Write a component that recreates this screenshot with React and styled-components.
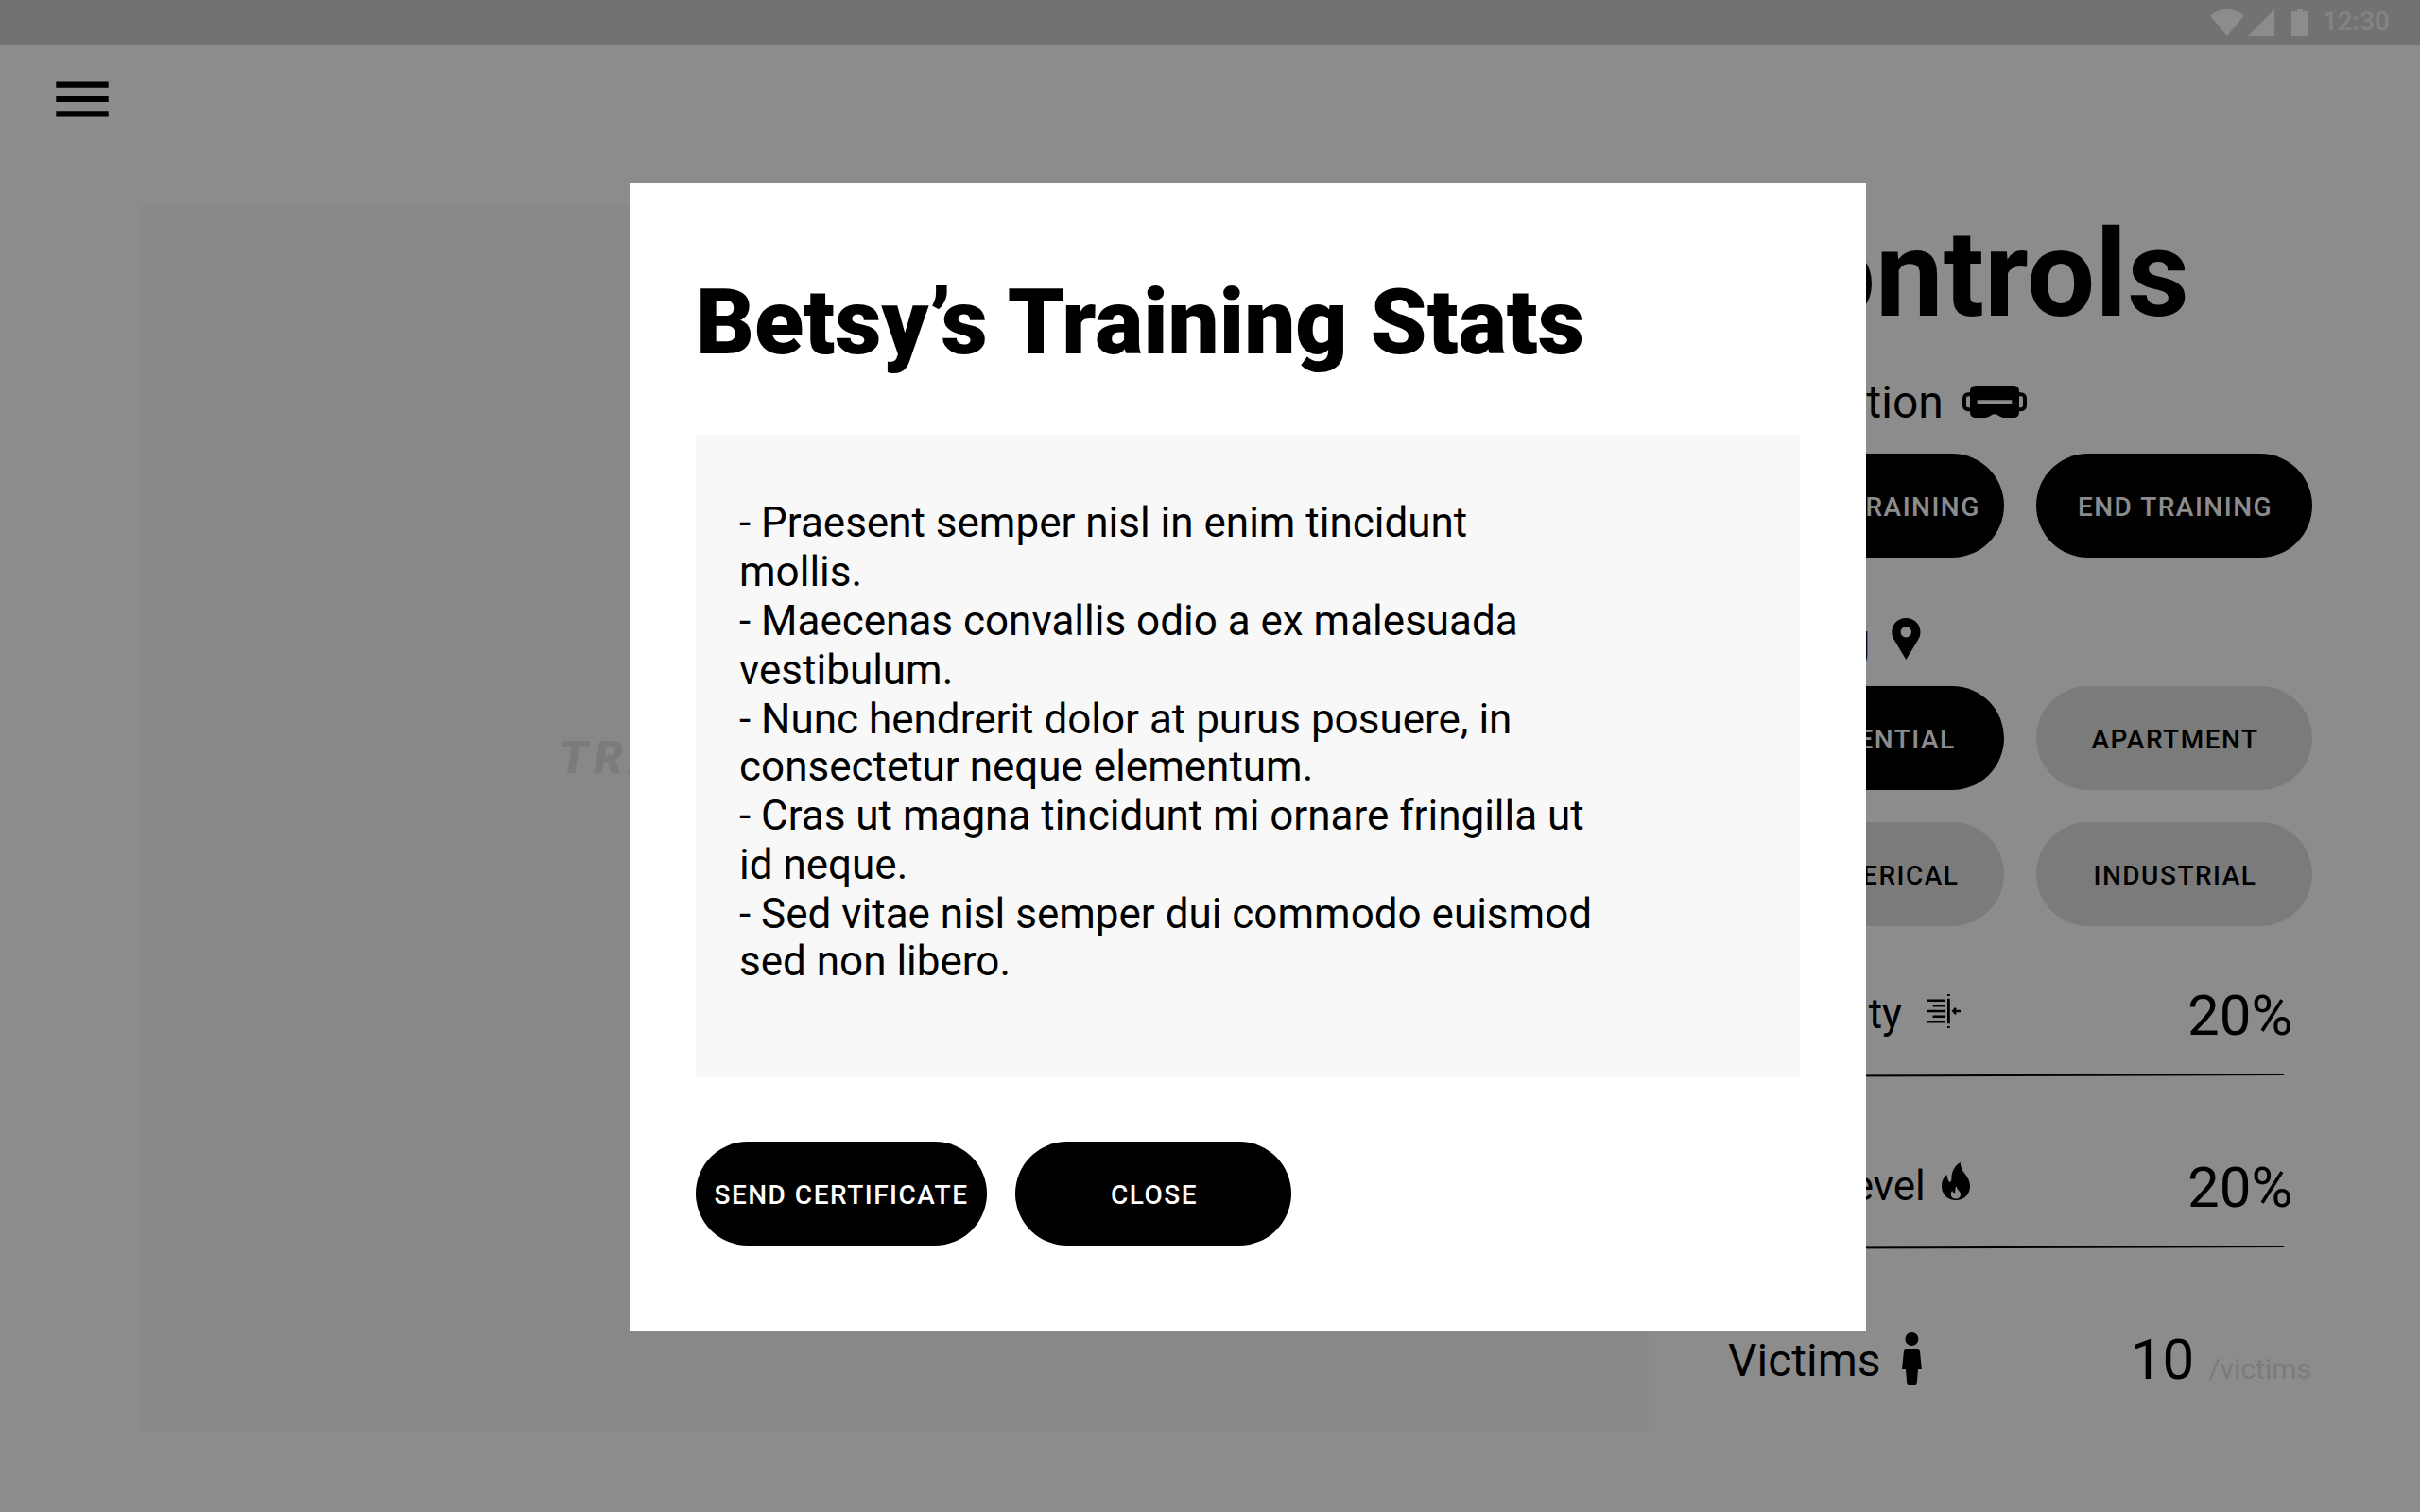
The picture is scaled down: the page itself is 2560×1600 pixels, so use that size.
import React from "react";
import styled, { createGlobalStyle } from "styled-components";

const GlobalStyle = createGlobalStyle`
  * { box-sizing: border-box; }
  body { margin: 0; background: #fff; font-family: Roboto, "Liberation Sans", sans-serif; color: #000; }
  h1, h2, p { margin: 0; }
  svg { display: block; flex: none; }
`;

const Screen = styled.div`
  position: relative;
  width: 2560px;
  height: 1600px;
  overflow: hidden;
  background: #fff;
`;

const StatusBar = styled.div`
  height: 48px;
  padding: 0 32px 0 0;
  display: flex;
  justify-content: flex-end;
  align-items: center;
  background: #cfcfcf;
`;

const StatusTime = styled.span`
  margin: -2px 0 0 15px;
  font-size: 28px;
  font-weight: 500;
  line-height: 34px;
  color: #efefef;
`;

const AppBar = styled.header`
  height: 170px;
  padding: 38px 59px;
`;

const Body = styled.main`
  display: flex;
  align-items: flex-start;
  padding-left: 148px;
  gap: 84px;
`;

const Feed = styled.section`
  width: 1596px;
  height: 1296px;
  padding: 556px 0 0 444px;
  background: #f8f8f8;
`;

const FeedText = styled.p`
  font-size: 48px;
  font-weight: 900;
  font-style: italic;
  line-height: 56px;
  letter-spacing: 0.15em;
  white-space: nowrap;
  color: #e0e0e0;
`;

const Controls = styled.aside`
  width: 618px;
  display: flex;
  flex-direction: column;
`;

const Title = styled.h1`
  font-size: 128px;
  line-height: 144px;
  font-weight: 700;
  white-space: nowrap;
`;

const Label = styled.div`
  display: flex;
  align-items: center;
  gap: ${(p) => p.$gap}px;
  margin-top: ${(p) => p.$top || 0}px;
  margin-left: ${(p) => p.$indent || 0}px;
  font-size: ${(p) => p.$size || 48}px;
  line-height: ${(p) => (p.$size === 44 ? 52 : 56)}px;
  white-space: nowrap;
`;

const PillGrid = styled.div`
  display: grid;
  grid-template-columns: 292px 292px;
  gap: 34px;
  margin-top: ${(p) => p.$top}px;
`;

const Pill = styled.button`
  width: ${(p) => (p.$wide ? 308 : 292)}px;
  height: 110px;
  padding: 2px 0 0 ${(p) => (p.$wide ? 0 : 2)}px;
  border: 0;
  border-radius: 55px;
  font-family: inherit;
  font-size: 28px;
  font-weight: 500;
  letter-spacing: 1.5px;
  white-space: nowrap;
  color: ${(p) => (p.$muted ? "#000" : "#fff")};
  background: ${(p) => (p.$muted ? "#e0e0e0" : "#000")};
`;

const Setting = styled.div`
  display: flex;
  justify-content: space-between;
  align-items: flex-start;
  height: 70px;
  margin-top: ${(p) => p.$top}px;
  padding-right: ${(p) => p.$right || 0}px;
`;

const Value = styled.div`
  display: flex;
  align-items: baseline;
  gap: 15px;
  font-size: 60px;
  line-height: 70px;
`;

const Unit = styled.span`
  font-size: 30px;
  line-height: 36px;
  color: #e0e0e0;
`;

const Overlay = styled.div`
  position: absolute;
  inset: 0;
  padding: 194px 0 0 666px;
  background: rgba(0, 0, 0, 0.45);
`;

const Dialog = styled.div`
  width: 1308px;
  height: 1214px;
  padding: 91px 70px 0;
  background: #fff;
`;

const DialogTitle = styled.h2`
  font-size: 96px;
  line-height: 112px;
  font-weight: 900;
  white-space: nowrap;
`;

const Stats = styled.div`
  height: 680px;
  margin-top: 63px;
  padding: 67px 46px 0;
  background: #f8f8f8;
`;

const Stat = styled.p`
  padding: ${(p) => (p.$tight ? "1px 0" : "0")};
  font-size: 44px;
  line-height: ${(p) => (p.$tight ? 50 : 52)}px;
  white-space: pre;
`;

const Actions = styled.div`
  display: flex;
  gap: 30px;
  margin-top: 68px;
`;

const StatusIcons = () => (
  <svg width="104" height="28" viewBox="0 0 104 28" fill="#fff">
    <path d="M0 6.4C5 2.4 11 0 18 0s13 2.4 18 6.4L18 28z" />
    <path d="M68 0v28H40z" />
    <path d="M86 2h6V0h6v2h6v26H86z" />
  </svg>
);

const MenuIcon = () => (
  <svg width="56" height="38" viewBox="0 0 56 38">
    <path d="M.3.5h55.4v6.2H.3zM.3 15.9h55.4v6.2H.3zM.3 31.3h55.4v6.2H.3z" />
  </svg>
);

const IconBox = styled.svg`
  margin-top: ${(p) => -p.$lift}px;
`;

const HeadsetIcon = () => (
  <IconBox $lift={2} width="68" height="34" viewBox="0 0 68 34">
    <rect x="2" y="9.3" width="64" height="16" rx="4" fill="none" stroke="#000" strokeWidth="4" />
    <path
      fillRule="evenodd"
      d="M14 0h40q6 0 6 6v22q0 6-6 6H44c-5 0-6-3.7-10-3.7S29 34 24 34H14q-6 0-6-6V6q0-6 6-6zM15.7 15.2v4.4h36.6v-4.4z"
    />
  </IconBox>
);

const PinIcon = () => (
  <IconBox $lift={4} width="31" height="44" viewBox="0 0 31 44">
    <path
      fillRule="evenodd"
      d="M15.3 0C6.6 0 .3 6.6.3 15c0 3.6 1.2 6 2.7 8.5L15.3 44 27.8 23.5c1.5-2.5 2.7-4.9 2.7-8.5C30.5 6.6 24 0 15.3 0zm0 9.1a5.7 5.7 0 1 1 0 11.4 5.7 5.7 0 0 1 0-11.4z"
    />
  </IconBox>
);

const ProximityIcon = () => (
  <IconBox $lift={6} width="36" height="36" viewBox="0 0 36 36">
    <path d="M0 5.5h20V8H0zM6.6 11.1H20v2.5H6.6zM0 16.8h20v2.5H0zM6.6 22.4H20v2.5H6.6zM0 28.1h20v2.5H0z" />
    <path d="M22 4.7h2.8v26.6H22zM22 0h2.8v2H22zM22 34h2.8v2H22z" />
    <path d="M36 18h-7.5M31 14.8 28.2 18l2.8 3.2" fill="none" stroke="#000" strokeWidth="2.3" />
  </IconBox>
);

const FlameIcon = () => (
  <IconBox $lift={10} width="30" height="40" viewBox="0 0 30 40">
    <path
      fillRule="evenodd"
      d="M19.7 0C20 4 21 7.5 24 11.2 27 14.8 30 19.5 30 25.5 30 34 23.5 40 15 40S0 34 0 25.2C0 19.5 2.3 15.5 5.6 13c.2 3.6 1 6.6 3.2 8.2 1-.9 1.7-2 1.7-3.6C10.2 10 13.5 4 19.7 0zM15.6 25.2c-1.8 2-1 4.5-1.5 7-1.6.4-2.6-.8-2.9-2.4-1.3 1.6-1.6 3.2-1.4 4.8.3 2.5 2.5 4 5.1 4s5.2-1.7 5.2-4.7c0-3.4-3.6-4.5-4.5-8.7z"
    />
  </IconBox>
);

const PersonIcon = () => (
  <IconBox $lift={4} width="21" height="56" viewBox="0 0 21 56">
    <circle cx="10.4" cy="7" r="7" />
    <path d="M4.5 18h12q2.3 0 2.5 2.3L20.9 39H17l-1.3 15q-.2 2-2 2H7.2q-1.8 0-2-2L4 39H0l1.9-18.7Q2.1 18 4.5 18z" />
  </IconBox>
);

const Track = () => (
  <IconBox $lift={-25} width="588" height="5" viewBox="0 0 588 5">
    <path d="M0 3.8 588 2" fill="none" stroke="#000" strokeWidth="2" />
  </IconBox>
);

const places = [
  ["RESIDENTIAL", false],
  ["APARTMENT", true],
  ["COMMERICAL", true],
  ["INDUSTRIAL", true],
];

const stats = [
  ["- Praesent semper nisl in enim tincidunt\nmollis.", false],
  ["- Maecenas convallis odio a ex malesuada\nvestibulum.", false],
  ["- Nunc hendrerit dolor at purus posuere, in\nconsectetur neque elementum.", true],
  ["- Cras ut magna tincidunt mi ornare fringilla ut\nid neque.", false],
  ["- Sed vitae nisl semper dui commodo euismod\nsed non libero.", true],
];

export default function App() {
  return (
    <Screen>
      <GlobalStyle />
      <StatusBar>
        <StatusIcons />
        <StatusTime>12:30</StatusTime>
      </StatusBar>
      <AppBar>
        <MenuIcon />
      </AppBar>
      <Body>
        <Feed>
          <FeedText>TRAINING FEED</FeedText>
        </Feed>
        <Controls>
          <Title>Controls</Title>
          <Label $gap={20} $top={36}>
            Simulation <HeadsetIcon />
          </Label>
          <PillGrid $top={26}>
            <Pill>START TRAINING</Pill>
            <Pill>END TRAINING</Pill>
          </PillGrid>
          <Label $gap={22} $top={60}>
            Setting <PinIcon />
          </Label>
          <PillGrid $top={20}>
            {places.map(([name, muted]) => (
              <Pill key={name} $muted={muted}>
                {name}
              </Pill>
            ))}
          </PillGrid>
          <Setting $top={60} $right={20.5}>
            <Label $size={44} $top={7} $gap={26}>
              Proximity <ProximityIcon />
            </Label>
            <Value>20%</Value>
          </Setting>
          <Track />
          <Setting $top={82} $right={20.5}>
            <Label $size={44} $top={7} $indent={3} $gap={17}>
              Heat Level <FlameIcon />
            </Label>
            <Value>20%</Value>
          </Setting>
          <Track />
          <Setting $top={82} $right={1}>
            <Label $gap={22} $top={8}>
              Victims <PersonIcon />
            </Label>
            <Value>
              10 <Unit>/victims</Unit>
            </Value>
          </Setting>
        </Controls>
      </Body>
      <Overlay>
        <Dialog>
          <DialogTitle>Betsy’s Training Stats</DialogTitle>
          <Stats>
            {stats.map(([text, tight]) => (
              <Stat key={text} $tight={tight}>
                {text}
              </Stat>
            ))}
          </Stats>
          <Actions>
            <Pill $wide>SEND CERTIFICATE</Pill>
            <Pill>CLOSE</Pill>
          </Actions>
        </Dialog>
      </Overlay>
    </Screen>
  );
}
